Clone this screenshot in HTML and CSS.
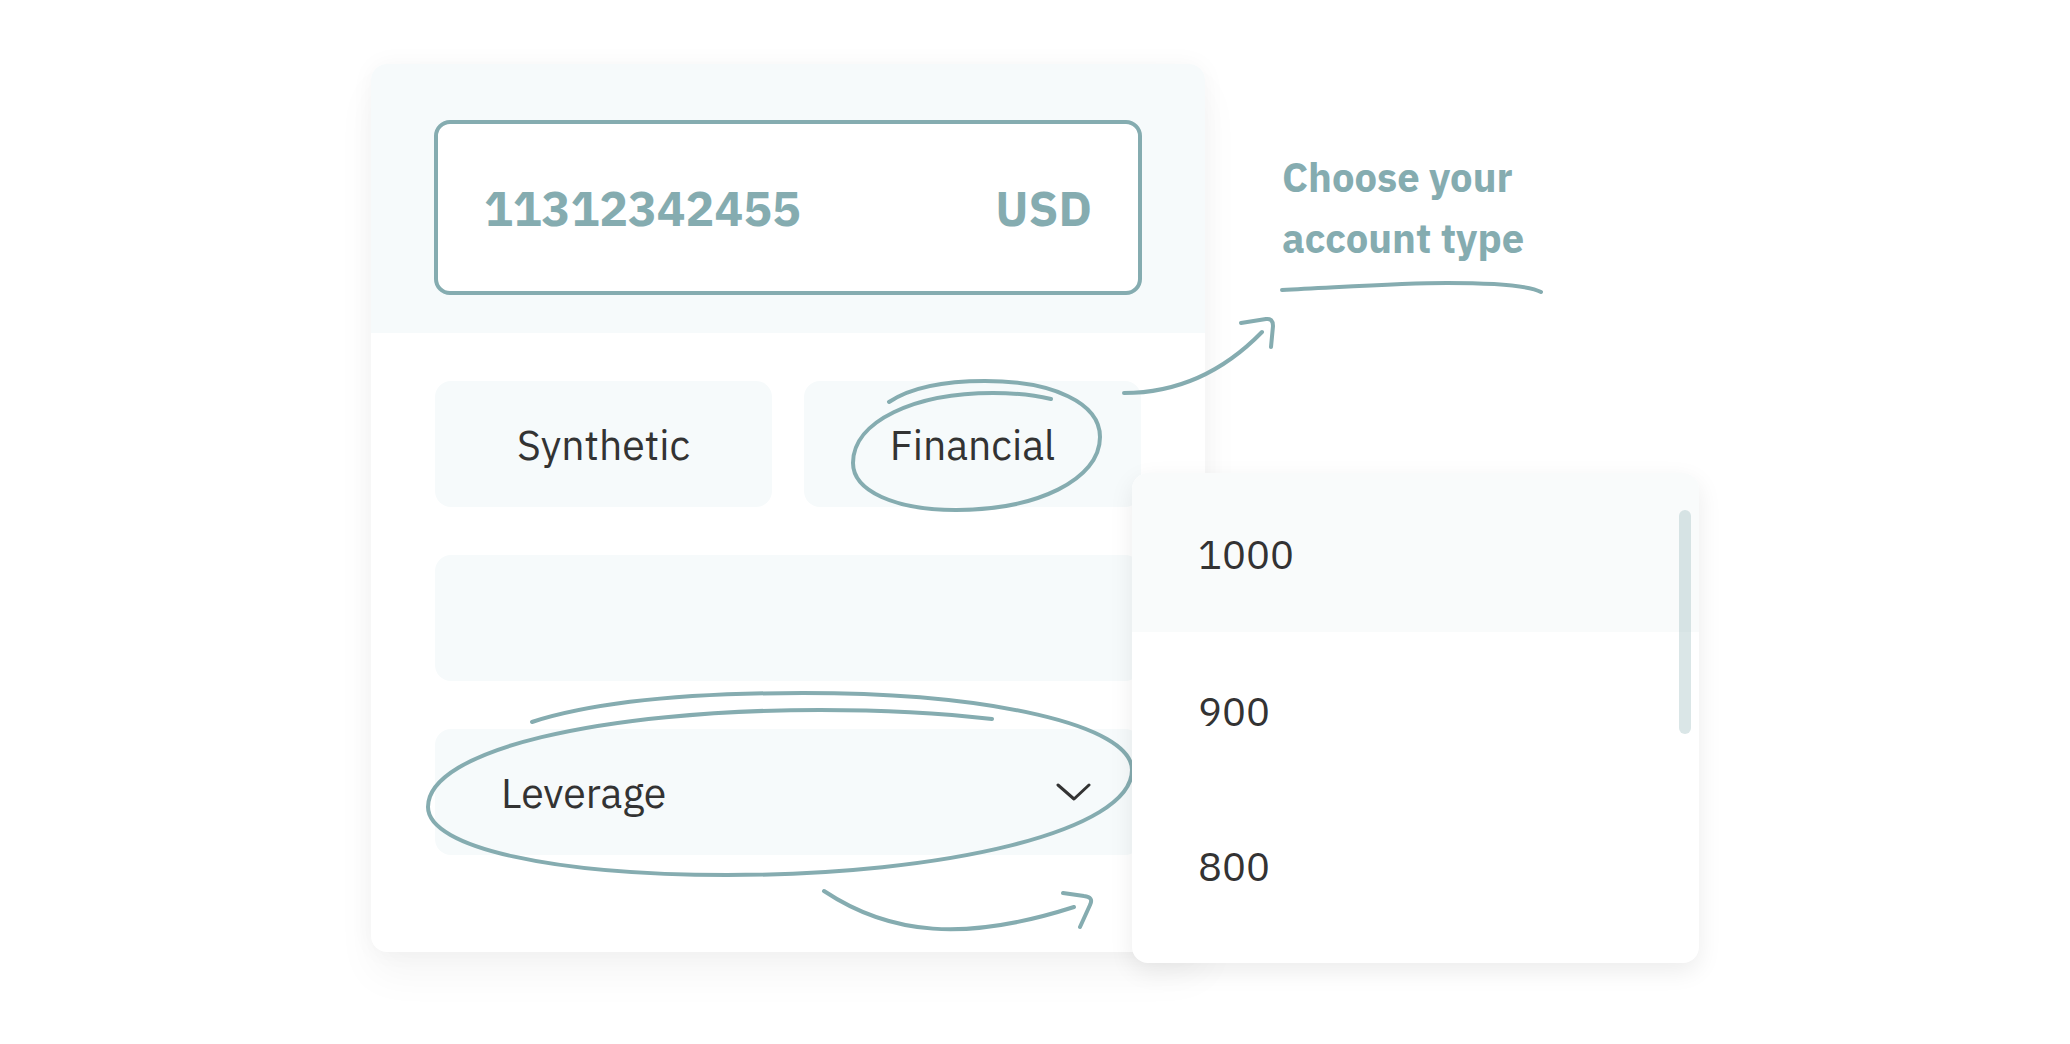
FILE: index.html
```html
<!DOCTYPE html>
<html lang="en">
<head>
<meta charset="utf-8">
<meta name="viewport" content="width=device-width, initial-scale=1">
<title>Choose your account type</title>
<link rel="stylesheet" href="styles.css">
</head>
<body>
<main class="stage">
  <section class="card" aria-label="Account">
    <header class="card-header">
      <div class="account">
        <span class="account-number">11312342455</span>
        <span class="account-currency">USD</span>
      </div>
    </header>
    <div class="card-body">
      <div class="types">
        <button type="button" class="tile">Synthetic</button>
        <button type="button" class="tile">Financial
          <svg class="sketch ring-type" viewBox="844 371 268 150" aria-hidden="true">
            <path d="M889 402C910 388 945 381 985 381C1053 381 1100 403 1100 437C1100 480 1036 510 956 510C895 510 853 491 853 463C853 421 915 393 993 393C1014 393 1034 395 1051 399"/>
          </svg>
        </button>
      </div>
      <input class="tile" type="text" aria-label="Account name">
      <div class="leverage">
        <select class="tile leverage-select" aria-label="Leverage">
          <option>Leverage</option>
          <option>1000</option>
          <option>900</option>
          <option>800</option>
        </select>
        <svg class="chevron" viewBox="0 0 36 20" aria-hidden="true"><path d="M2 2L18 16L33 2"/></svg>
        <svg class="sketch ring-leverage" viewBox="415 679 730 210" aria-hidden="true">
          <path d="M532 722C600 700 700 693 803 693C990 693 1132 725 1132 770C1132 831 945 875 727 875C555 875 428 848 428 807C428 750 600 710 820 710C880 710 940 713 992 719"/>
        </svg>
      </div>
    </div>
    <svg class="sketch arrow-type" viewBox="1115 309 170 94" aria-hidden="true">
      <path d="M1124 393C1180 393 1225 370 1262 332M1241 323L1266 319Q1273 318 1273 326L1271 347"/>
    </svg>
    <svg class="sketch arrow-leverage" viewBox="814 881 290 60" aria-hidden="true">
      <path d="M824 891C890 935 965 942 1074 907M1063 893L1084 896Q1094 897 1090 905L1080 927"/>
    </svg>
  </section>

  <aside class="note">
    <p class="note-text">Choose your<br>account type</p>
    <svg class="underline" viewBox="1277 277 270 20" aria-hidden="true">
      <path d="M1282 290C1345 287 1400 283 1447 283C1495 283 1530 286 1541 292"/>
    </svg>
  </aside>

  <div class="menu">
    <ul class="menu-list">
      <li><button type="button" class="option option-active">1000</button></li>
      <li><button type="button" class="option">900</button></li>
      <li><button type="button" class="option">800</button></li>
    </ul>
    <span class="scroll-thumb"></span>
  </div>
</main>
</body>
</html>
```
FILE: styles.css
```css
:root {
  --teal: #85acb0;
  --ink: #333333;
  --tint: #f6fafb;
  --radius: 16px;
}

* { box-sizing: border-box; }

body {
  margin: 0;
  background: #ffffff;
  color: var(--ink);
  font-family: "IBM Plex Sans", "Open Sans", "Noto Sans", sans-serif;
}

.stage {
  position: relative;
  display: grid;
  grid-template-columns: minmax(0, 834px) minmax(0, 1fr);
  align-items: start;
  max-width: 1328px;
  margin: 0 auto;
  padding: 64px 0 92px;
}

.card {
  position: relative;
  border-radius: var(--radius);
  background: #ffffff;
  box-shadow: 0 0 24px rgba(14, 14, 14, 0.04), 0 24px 40px rgba(14, 14, 14, 0.04);
}

.card-header {
  padding: 56px 63px 38px;
  border-radius: var(--radius) var(--radius) 0 0;
  background: var(--tint);
}

.account {
  display: flex;
  align-items: center;
  justify-content: space-between;
  height: 175px;
  padding: 0 46px;
  border: 4px solid var(--teal);
  border-radius: var(--radius);
  background: #ffffff;
  color: var(--teal);
  font-size: 48px;
  font-weight: 700;
}

.card-body {
  display: grid;
  gap: 48px;
  padding: 48px 64px 97px;
}

.types {
  display: grid;
  grid-template-columns: 1fr 1fr;
  gap: 32px;
}

.tile {
  position: relative;
  width: 100%;
  height: 126px;
  padding: 0 66px;
  border: 0;
  border-radius: var(--radius);
  background: var(--tint);
  color: var(--ink);
  font: inherit;
  font-size: 41px;
}

.leverage { position: relative; }

.leverage-select {
  display: block;
  appearance: none;
}

.sketch,
.underline {
  fill: none;
  stroke: var(--teal);
  stroke-width: 4px;
  stroke-linecap: round;
  stroke-linejoin: round;
}

.sketch {
  position: absolute;
  pointer-events: none;
}

.ring-type {
  top: -10px;
  left: 40px;
  width: 268px;
  height: 150px;
}

.ring-leverage {
  top: -50px;
  left: -20px;
  width: 730px;
  height: 210px;
}

.arrow-type {
  top: 245px;
  right: -80px;
  width: 170px;
  height: 94px;
}

.arrow-leverage {
  right: 101px;
  bottom: 11px;
  width: 290px;
  height: 60px;
}

.chevron {
  position: absolute;
  top: 54px;
  right: 49px;
  width: 36px;
  height: 20px;
  fill: none;
  stroke: var(--ink);
  stroke-width: 3px;
  stroke-linecap: round;
  stroke-linejoin: round;
  pointer-events: none;
}

.note {
  padding: 83px 0 0 77px;
  color: var(--teal);
}

.note-text {
  margin: 0;
  font-size: 40px;
  font-weight: 700;
  line-height: 61px;
}

.underline {
  display: block;
  width: 270px;
  height: 20px;
  margin: 8px 0 0 -5px;
}

.menu {
  position: absolute;
  top: 473px;
  right: 0;
  width: 567px;
  padding-bottom: 21px;
  overflow: hidden;
  border-radius: var(--radius);
  background: #ffffff;
  box-shadow: 0 8px 24px rgba(14, 14, 14, 0.08);
}

.menu-list {
  margin: 0;
  padding: 0;
  list-style: none;
}

.option {
  display: block;
  width: 100%;
  height: 155px;
  padding: 3px 66px 0;
  border: 0;
  background: none;
  color: var(--ink);
  font: inherit;
  font-size: 40px;
  text-align: left;
}

.option-active {
  height: 159px;
  background: #f9fbfb;
}

.scroll-thumb {
  position: absolute;
  top: 37px;
  right: 8px;
  width: 12px;
  height: 224px;
  border-radius: 6px;
  background: rgba(133, 172, 176, 0.3);
}
```
